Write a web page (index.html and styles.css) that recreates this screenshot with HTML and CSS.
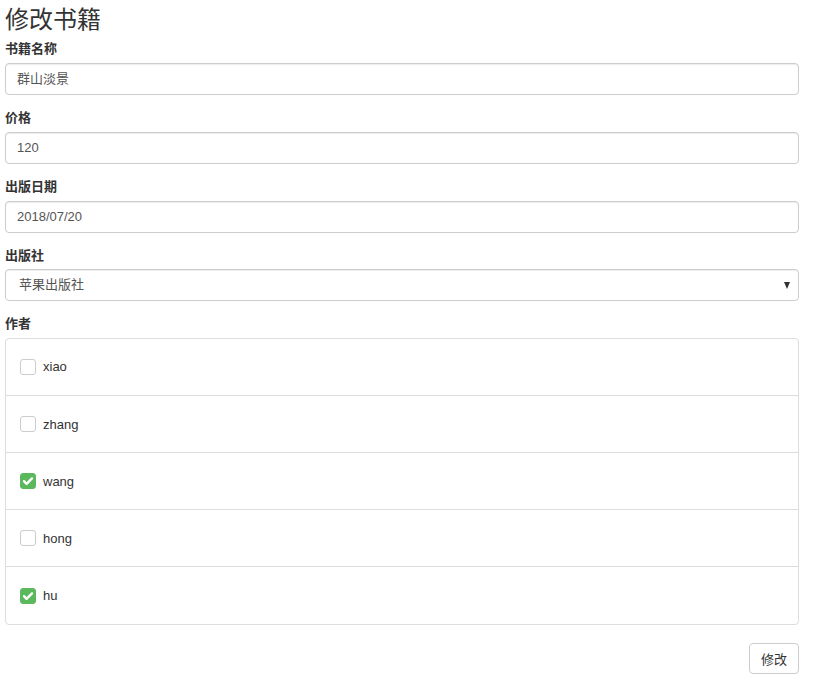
FILE: index.html
```html
<!DOCTYPE html>
<html lang="zh">
<head>
<meta charset="utf-8">
<title>修改书籍</title>
<link rel="stylesheet" href="styles.css">
</head>
<body>
<div class="page">
  <h3 class="title">修改书籍</h3>
  <div class="group">
    <label class="label">书籍名称</label>
    <div class="control">群山淡景</div>
  </div>
  <div class="group">
    <label class="label">价格</label>
    <div class="control">120</div>
  </div>
  <div class="group">
    <label class="label">出版日期</label>
    <div class="control">2018/07/20</div>
  </div>
  <div class="group group-tight">
    <label class="label">出版社</label>
    <div class="control select"><span>苹果出版社</span><span class="caret"></span></div>
  </div>
  <div class="group">
    <label class="label">作者</label>
    <ul class="list">
      <li class="item"><span class="box"></span><span class="name">xiao</span></li>
      <li class="item"><span class="box"></span><span class="name">zhang</span></li>
      <li class="item"><span class="box checked"><svg viewBox="0 0 16 16" width="16" height="16"><path d="M4 8.2l2.6 2.6L12 5.4" fill="none" stroke="#fff" stroke-width="2.4" stroke-linecap="round" stroke-linejoin="round"/></svg></span><span class="name">wang</span></li>
      <li class="item"><span class="box"></span><span class="name">hong</span></li>
      <li class="item"><span class="box checked"><svg viewBox="0 0 16 16" width="16" height="16"><path d="M4 8.2l2.6 2.6L12 5.4" fill="none" stroke="#fff" stroke-width="2.4" stroke-linecap="round" stroke-linejoin="round"/></svg></span><span class="name">hu</span></li>
    </ul>
  </div>
  <div class="actions">
    <button class="btn">修改</button>
  </div>
</div>
</body>
</html>
```
FILE: styles.css
```css
* { box-sizing: border-box; }
html, body { margin: 0; padding: 0; background: #fff; }
body {
  font-family: "Liberation Sans", Roboto, "Noto Sans CJK SC", sans-serif;
  font-size: 13px;
  color: #333;
}
.page { padding: 0 14px 0 5px; }
.title {
  margin: 0;
  height: 38px;
  line-height: 36px;
  font-size: 24px;
  font-weight: 400;
  color: #333;
  font-family: "Noto Sans CJK SC", sans-serif;
}
.group { margin-bottom: 12px; }
.group-tight .control { margin-top: -1px; }
.label {
  display: block;
  line-height: 20px;
  margin-bottom: 5px;
  font-weight: 700;
  font-size: 13px;
  font-family: "Noto Sans CJK SC", sans-serif;
}
.control {
  height: 32px;
  border: 1px solid #ccc;
  border-radius: 4px;
  padding: 0 11px;
  line-height: 30px;
  color: #555;
  font-size: 13px;
  box-shadow: inset 0 1px 1px rgba(0,0,0,.075);
}
.select {
  display: flex;
  justify-content: space-between;
  align-items: center;
  padding: 0 8px 0 13px;
}
.caret {
  width: 0; height: 0;
  border-left: 3.5px solid transparent;
  border-right: 3.5px solid transparent;
  border-top: 7px solid #333;
  margin-top: 1px;
}
.list {
  list-style: none;
  margin: 0 0 18px;
  padding: 0;
  border: 1px solid #ddd;
  border-radius: 4px;
}
.item {
  height: 57px;
  display: flex;
  align-items: center;
  padding: 0 14px;
  border-top: 1px solid #ddd;
}
.item:first-child { border-top: 0; height: 56px; padding-bottom: 1px; }
.item:last-child { height: 58px; }
.box {
  width: 16px; height: 16px;
  border: 1px solid #ccc;
  border-radius: 3px;
  margin-right: 7px;
  display: flex;
  align-items: center;
  justify-content: center;
  background: #fff;
}
.box.checked { background: #5cb85c; border-color: #5cb85c; }
.box svg { display: block; flex: none; }
.name { color: #333; font-size: 13px; }
.actions { display: flex; justify-content: flex-end; }
.btn {
  width: 50px; height: 31px;
  border: 1px solid #ccc;
  border-radius: 4px;
  background: #fff;
  color: #333;
  font-size: 13px;
  font-family: "Noto Sans CJK SC", sans-serif;
  padding: 0;
}
```
